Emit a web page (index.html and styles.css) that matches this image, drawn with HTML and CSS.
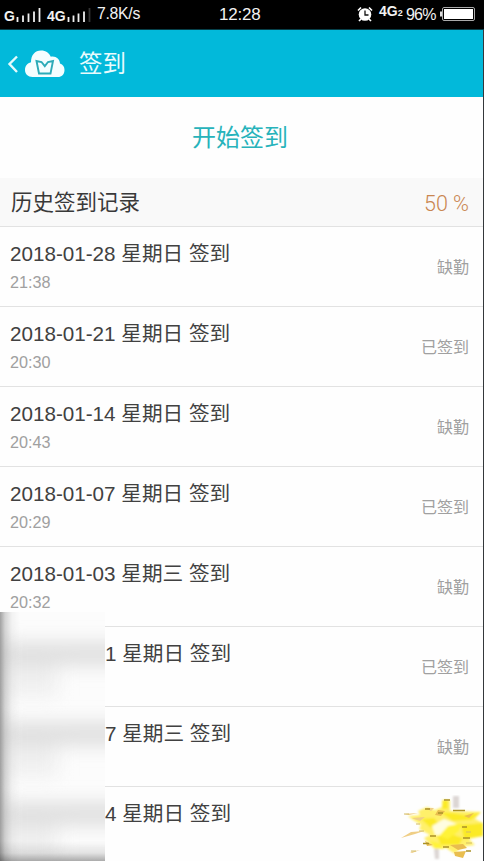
FILE: index.html
```
<!DOCTYPE html>
<html lang="zh-CN">
<head>
<meta charset="utf-8">
<title>签到</title>
<link rel="stylesheet" href="styles.css">
</head>
<body>
<div class="screen">
  <div class="status">
    <div class="signals">
      <span class="net">G</span>
      <svg class="bars" width="26" height="16"><path d="M1.500 10v5M7 8.500v6.500M12.500 6.500v8.500M18 4.500v10.500M23.500 1v14"/></svg>
      <span class="net net-4g">4G</span>
      <svg class="bars" width="26" height="16"><path d="M1.500 10v5M6.500 8.500v6.500M11.500 6.500v8.500M17 4.500v10.500"/><path class="off" d="M22.500 1v14"/></svg>
      <span class="speed">7.8K/s</span>
    </div>
    <div class="clock">12:28</div>
    <div class="system">
      <svg class="alarm" width="16" height="16" viewBox="0 0 16 16"><circle cx="8" cy="8.500" r="6.300" fill="#fff"/><path d="M1 4.500 4 1.500M15 4.500l-3-3M4 13l-2 2M12 13l2 2" stroke="#fff" stroke-width="1.700"/><path d="M8 4.500v4.500h3.500" fill="none" stroke="#111" stroke-width="1.300"/></svg>
      <span class="data">4G<small>2</small></span>
      <span class="percent">96%</span>
      <svg class="battery" width="36" height="16"><path d="M0 5.500h2v5H0z" fill="#ddd"/><rect x="2.500" y="1.500" width="32" height="13" rx="1.500" fill="none" stroke="#aaa"/><rect x="4" y="3" width="29" height="10" fill="#fff"/></svg>
    </div>
  </div>
  <header class="header">
    <svg class="back" width="12" height="20"><path d="M11 2.500 3.500 10l7.500 8"/></svg>
    <svg class="cloud" width="40" height="28" viewBox="0 0 40 28"><path d="M7.500 27C3 27 0 24 0 20c0-4 2.300-7 6-7.800C6 5 10 .5 16 .5c5 0 8.300 2.500 9.800 6.300 5-1 9 2.200 9.200 6.700 3 .8 4.500 3.500 4.500 6.500 0 4.500-3 7-6.500 7z" fill="#f4feff"/><path d="M11.500 11 14 23.500h11.500L28 11l-5 1-3.200 4.200L16.500 12z" fill="none" stroke="#2cabb8" stroke-width="1.900"/></svg>
    <h1>签到</h1>
  </header>
  <div class="start">开始签到</div>
  <div class="section"><h2>历史签到记录</h2><span class="rate">50 %</span></div>
  <div class="list">
    <div class="row"><div><p class="title">2018-01-28 星期日 签到</p><p class="time">21:38</p></div><span class="state">缺勤</span></div>
    <div class="row"><div><p class="title">2018-01-21 星期日 签到</p><p class="time">20:30</p></div><span class="state">已签到</span></div>
    <div class="row"><div><p class="title">2018-01-14 星期日 签到</p><p class="time">20:43</p></div><span class="state">缺勤</span></div>
    <div class="row"><div><p class="title">2018-01-07 星期日 签到</p><p class="time">20:29</p></div><span class="state">已签到</span></div>
    <div class="row"><div><p class="title">2018-01-03 星期三 签到</p><p class="time">20:32</p></div><span class="state">缺勤</span></div>
    <div class="row masked"><p class="title">1 星期日 签到</p><span class="state">已签到</span></div>
    <div class="row masked"><p class="title">7 星期三 签到</p><span class="state">缺勤</span></div>
    <div class="row masked"><p class="title">4 星期日 签到</p></div>
  </div>
  <div class="mask"><i class="smudge s1"></i><i class="smudge s2"></i><i class="smudge s3"></i></div>
  <svg class="sun" width="84" height="66" viewBox="0 0 84 66">
    <defs><filter id="soft" x="-10%" y="-10%" width="120%" height="120%"><feGaussianBlur stdDeviation="1"/></filter><filter id="fine"><feGaussianBlur stdDeviation=".5"/></filter></defs>
    <g filter="url(#soft)">
      <path d="M54 1h6v12h-6zM35 54h5v10h-4z" fill="#dcd6d4"/>
      <path d="M43 5h8v11h9l22 1-6 7 8 4v13l-14 3 6 6-14 2-6 7-9-6-11 1-6-5-5-6 6-3-11-6 2-4-8-5-5-4 12-1-2-4 9-4 8 3 7-3z" fill="#fff06a"/>
      <path d="M22 24l13-1 6 7-9 3zM41 17l13 1 12 2 16-3-10 8-18 1zM62 30l22-2v13l-19 3zM38 41l14-2 12 4-4 7-18 0zM44 5h5v9h-6z" fill="#fbea25"/>
      <path d="M33 31l12-7 13 5 2 6-10 6-14-1z" fill="#fffde0"/>
      <path d="M49 31l14-3-3 8-11 8-9-3zM31 46l9 2 5 6-9-1z" fill="#fff338"/>
    </g>
    <g filter="url(#fine)">
      <path d="M2 43l10-6 13-1-9 3zM5 19l14-1-9 2zM13 23l13-1-5 4-6-2zM11 57l10-2-8 3zM26 13h9l-3 3zM17 30h7" fill="#efce86"/>
      <path d="M39 15l7 1-4 5-6-1zM26 46l8 4-6 1zM51 50l13-1 4 4-9 2zM55 57l12-1-3 7-8-2zM65 21l10-3-5 5z" fill="#e9bd4f"/>
      <path d="M54 15.500h12M39 18h5M63 32h5M44 52h6M24 48.500h6M64 43h7M67 56h5M26 14h5M45 5h6M31 41h6" stroke="#aa9127" stroke-width="1.400"/>
      <path d="M5 19h5M17 29h4M12 56h5M20 36h5M67 37h5M67 48h6" stroke="#d3be68" stroke-width="1.200"/>
    </g>
  </svg>
  <div class="edge"></div>
</div>
</body>
</html>
```
FILE: styles.css
```
* { box-sizing: border-box; }
body { margin: 0; background: #fff; font-family: "Liberation Sans", "Noto Sans CJK SC", sans-serif; }
h1, h2, p { margin: 0; font-weight: 400; }
svg { display: block; flex: none; }
.screen { position: relative; width: 484px; height: 861px; overflow: hidden; background: #fefefe; }
.status { display: grid; grid-template-columns: 219px 1fr auto; height: 30px; background: #000; color: #f2f2f2; padding-right: 8px; border-bottom: 1px solid #06404a; }
.signals, .system { display: flex; align-items: center; }
.signals { padding-left: 4px; }
.net { width: 12px; font-size: 14px; font-weight: 700; line-height: 28px; padding-top: 1px; }
.net-4g { width: 20px; margin-left: 5px; }
.bars { fill: none; stroke: #eee; stroke-width: 1.8; margin-top: -1px; }
.bars .off { stroke: #333; }
.speed { margin: -2px 0 0 4px; font-size: 15.8px; letter-spacing: -.3px; }
.clock { font-size: 17px; letter-spacing: -.2px; line-height: 30px; }
.alarm { margin: -2px 6px 0 0; }
.data { width: 27px; font-size: 14px; font-weight: 700; line-height: 18px; margin-top: -7px; white-space: nowrap; }
.data small { font-size: 9px; }
.percent { width: 34px; margin-top: -1px; font-size: 16px; letter-spacing: -.8px; }
.battery { margin-top: -2px; }
.header { display: flex; align-items: center; height: 67px; padding-left: 6px; background: #02b9da; color: #e9fbfd; }
.back { fill: none; stroke: #e4fafc; stroke-width: 2.4; }
.cloud { margin-left: 7px; }
.header h1 { margin-left: 14px; font-size: 23.5px; line-height: 34px; }
.start { height: 81px; line-height: 81px; padding-right: 4px; text-align: center; font-size: 24px; color: #27b3bb; }
.section { display: flex; justify-content: space-between; align-items: center; height: 49px; padding: 2px 15px 0 11px; border-bottom: 1px solid #e2e2e2; background: #f9f9f9; }
.section h2 { font-size: 21.5px; line-height: 32px; color: #393939; }
.rate { font-family: Roboto, sans-serif; font-size: 21.5px; font-weight: 300; color: #c98650; }
.row { display: flex; justify-content: space-between; height: 80px; padding: 11px 15px 0 10px; border-bottom: 1px solid #e2e2e2; }
.masked { padding-left: 105px; }
.title { font-size: 20.65px; line-height: 32px; color: #414141; white-space: nowrap; }
.time { font-size: 16.2px; line-height: 24px; color: #a0a0a0; }
.state { font-size: 16px; line-height: 60px; color: #a0a0a0; }
.mask { position: absolute; left: 0; top: 612px; width: 105px; height: 249px; overflow: hidden; background: #fcfcfc; }
.mask::after { content: ""; position: absolute; inset: 0; background: linear-gradient(90deg, rgba(0,0,0,.36), rgba(0,0,0,.16) 5px, rgba(0,0,0,.04) 12px, transparent 20px), linear-gradient(0deg, rgba(0,0,0,.32), rgba(0,0,0,.1) 8px, transparent 20px); }
.smudge { position: absolute; left: 6px; width: 130px; height: 24px; background: #dfdfdf; filter: blur(9px); }
.smudge::after { content: ""; position: absolute; left: 0; top: 24px; width: 52px; height: 30px; background: #efefef; }
.s1 { top: 30px; }
.s2 { top: 110px; }
.s3 { top: 190px; }
.sun { position: absolute; left: 399px; top: 795px; }
.edge { position: absolute; right: 0; top: 30px; width: 1px; height: 831px; background: #34383b; }
```
